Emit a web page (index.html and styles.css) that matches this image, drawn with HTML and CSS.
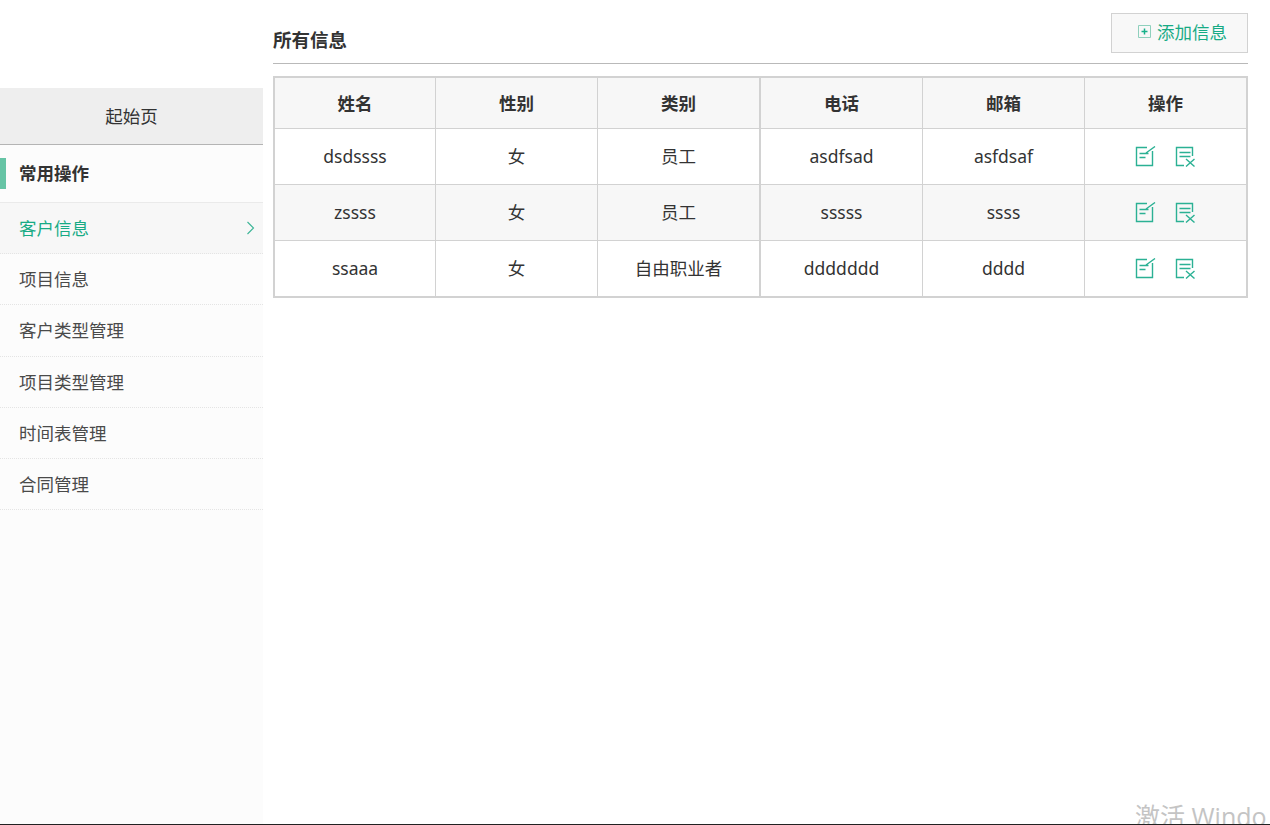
FILE: index.html
```html
<!DOCTYPE html>
<html lang="zh-CN">
<head>
  <meta charset="UTF-8">
  <meta name="viewport" content="width=device-width, initial-scale=1.0">
  <title>所有信息</title>
  <link rel="stylesheet" href="styles.css">
</head>
<body>
  <div class="page">
    <div class="sidebar">
      <div class="side-start">起始页</div>
      <div class="side-title">常用操作</div>
      <ul class="side-menu">
        <li class="active">客户信息
          <svg class="arrow" width="9" height="14" viewBox="0 0 9 14" fill="none" stroke="currentColor" stroke-width="1.1"><path d="M1.500 1l6 6-6 6"/></svg>
        </li>
        <li>项目信息</li>
        <li>客户类型管理</li>
        <li>项目类型管理</li>
        <li>时间表管理</li>
        <li>合同管理</li>
      </ul>
    </div>
    <div class="main">
      <div class="main-head">
        <h2 class="main-title">所有信息</h2>
        <button class="add-button">
          <svg width="13" height="13" viewBox="0 0 13 13" fill="none" stroke="#17b18a"><path d="M.5.5h12v12H.5z" stroke="#8fd0bd"/><path d="M6.500 3.500v6M3.500 6.500h6" stroke-width="1.500"/></svg>
          添加信息
        </button>
      </div>
      <table class="info-table">
        <thead>
          <tr><th class="col-a">姓名</th><th class="col-b">性别</th><th class="col-c">类别</th><th class="col-b">电话</th><th class="col-b">邮箱</th><th>操作</th></tr>
        </thead>
        <tbody>
          <tr>
            <td>dsdssss</td><td>女</td><td class="col-c">员工</td><td>asdfsad</td><td>asfdsaf</td>
            <td><span class="ops">
              <svg width="21" height="21" viewBox="0 0 21 21" fill="none" stroke="#2bb194" stroke-width="1.400"><path d="M12 1.500H1.500v18h16V5"/><path d="M4.500 7.500h9M4.500 11.500h6M11 7l9-6.500"/></svg>
              <svg width="21" height="21" viewBox="0 0 21 21" fill="none" stroke="#2bb194" stroke-width="1.400"><path d="M9 19.500H1.500v-18h16V10"/><path d="M4.500 6.500h11M4.500 10.500h11M11 13l8.500 7.500M19.500 13L11 20.500"/></svg>
            </span></td>
          </tr>
          <tr class="even">
            <td>zssss</td><td>女</td><td class="col-c">员工</td><td>sssss</td><td>ssss</td>
            <td><span class="ops">
              <svg width="21" height="21" viewBox="0 0 21 21" fill="none" stroke="#2bb194" stroke-width="1.400"><path d="M12 1.500H1.500v18h16V5"/><path d="M4.500 7.500h9M4.500 11.500h6M11 7l9-6.500"/></svg>
              <svg width="21" height="21" viewBox="0 0 21 21" fill="none" stroke="#2bb194" stroke-width="1.400"><path d="M9 19.500H1.500v-18h16V10"/><path d="M4.500 6.500h11M4.500 10.500h11M11 13l8.500 7.500M19.500 13L11 20.500"/></svg>
            </span></td>
          </tr>
          <tr>
            <td>ssaaa</td><td>女</td><td class="col-c">自由职业者</td><td>ddddddd</td><td>dddd</td>
            <td><span class="ops">
              <svg width="21" height="21" viewBox="0 0 21 21" fill="none" stroke="#2bb194" stroke-width="1.400"><path d="M12 1.500H1.500v18h16V5"/><path d="M4.500 7.500h9M4.500 11.500h6M11 7l9-6.500"/></svg>
              <svg width="21" height="21" viewBox="0 0 21 21" fill="none" stroke="#2bb194" stroke-width="1.400"><path d="M9 19.500H1.500v-18h16V10"/><path d="M4.500 6.500h11M4.500 10.500h11M11 13l8.500 7.500M19.500 13L11 20.500"/></svg>
            </span></td>
          </tr>
        </tbody>
      </table>
    </div>
    <div class="watermark">激活 Windo</div>
  </div>
</body>
</html>
```

FILE: styles.css
```css
html, body {
  margin: 0;
  padding: 0;
  height: 100%;
  overflow: hidden;
  background-color: #fff;
  color: #333;
  font-family: "Noto Sans", "Noto Sans CJK SC", sans-serif;
  font-size: 17.5px;
}
.page {
  display: flex;
  position: relative;
  overflow: hidden;
  height: 824px;
  border-bottom: 1px solid #222;
}
.sidebar {
  width: 263px;
  flex-shrink: 0;
  padding-top: 88px;
  background-color: #fcfcfc;
  box-sizing: border-box;
  background-image: linear-gradient(#fff, #fff);
  background-size: 100% 88px;
  background-repeat: no-repeat;
}
.side-start {
  height: 56px;
  line-height: 56px;
  text-align: center;
  background-color: #eee;
  border-bottom: 1px solid #b4b4b4;
}
.side-title {
  height: 57px;
  line-height: 57px;
  padding-left: 19px;
  font-weight: bold;
  border-bottom: 1px solid #eaeaea;
  position: relative;
}
.side-title::before {
  content: "";
  position: absolute;
  left: 0;
  top: 13px;
  width: 6px;
  height: 31px;
  background-color: #66c4a5;
}
.side-menu {
  list-style: none;
  margin: 0;
  padding: 0;
}
.side-menu li {
  display: flex;
  justify-content: space-between;
  align-items: center;
  height: 49.2px;
  padding: 0 8px 1px 19px;
  border-bottom: 1px dotted #e4e4e4;
  color: #4a4a4a;
}
.side-menu li.active {
  background-color: #f7f7f7;
  color: #17ab85;
}
.arrow {
  color: #3bb597;
}
.main {
  flex: 1;
  padding: 0 22px 0 10px;
}
.main-head {
  display: flex;
  justify-content: space-between;
  align-items: flex-end;
  height: 63px;
  border-bottom: 1px solid #b9b9b9;
  margin-bottom: 12px;
}
.main-title {
  margin: 0;
  padding-bottom: 11px;
  font-size: 18.500px;
  font-weight: bold;
}
.add-button {
  display: flex;
  align-items: center;
  gap: 6px;
  box-sizing: border-box;
  width: 137px;
  height: 40px;
  margin-bottom: 10px;
  padding: 0 0 4px 26px;
  border: 1px solid #d2d2d2;
  background-color: #f8f8f8;
  color: #17ab85;
  font-family: inherit;
  font-size: 17.5px;
}
.info-table {
  width: 975px;
  table-layout: fixed;
  border-collapse: collapse;
  border: 2px solid #d2d2d2;
}
.info-table th,
.info-table td {
  border: 1px solid #d2d2d2;
  text-align: center;
  padding: 0 0 2px;
}
.info-table th {
  height: 48px;
  background-color: #f7f7f7;
  font-weight: bold;
}
.info-table td {
  height: 53px;
}
.col-a {
  width: 160px;
}
.col-b {
  width: 161px;
}
.col-c {
  width: 161px;
}
.info-table th.col-c,
.info-table td.col-c {
  border-right-width: 2px;
}
.info-table .even td {
  background-color: #f7f7f7;
}
.ops {
  display: flex;
  justify-content: center;
  gap: 19px;
  padding-top: 2px;
}
.watermark {
  position: absolute;
  left: 1135px;
  top: 797px;
  font-family: "Open Sans", "Noto Sans CJK SC", sans-serif;
  font-size: 25px;
  color: #c4c4c4;
  white-space: nowrap;
}
```
